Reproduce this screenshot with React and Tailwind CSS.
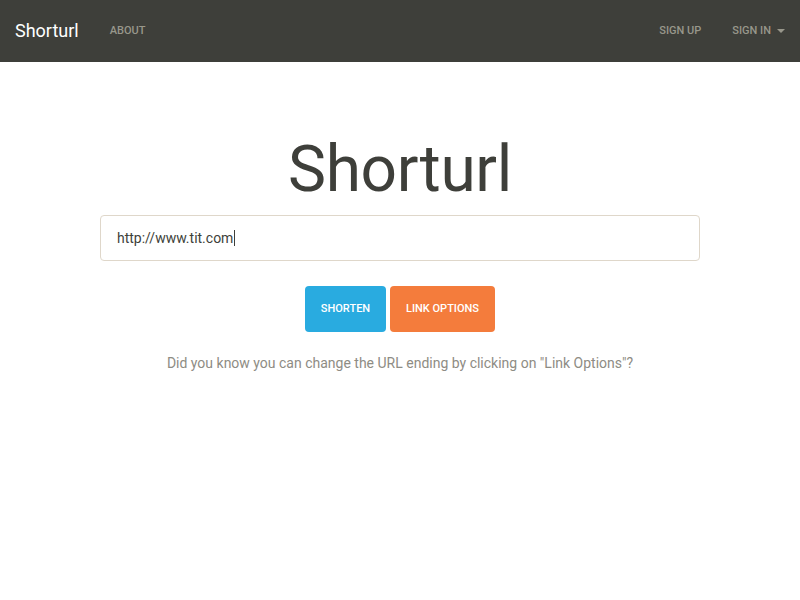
export default function App() {
  return (
    <div
      className="min-h-[600px] bg-white text-[#3e3f3a]"
      style={{ fontFamily: "Roboto, 'Liberation Sans', sans-serif" }}
    >
      <nav className="flex h-[62px] items-center justify-between bg-[#3e3f3a] px-[15px]">
        <div className="flex items-center">
          <span className="text-[18px] leading-none text-white">Shorturl</span>
          <a className="ml-[31px] text-[11px] font-medium uppercase text-[#98978b]">
            About
          </a>
        </div>
        <div className="flex items-center">
          <a className="text-[11px] font-medium uppercase text-[#98978b]">
            Sign up
          </a>
          <a className="ml-[31px] flex items-center text-[11px] font-medium uppercase text-[#98978b]">
            Sign in
            <svg className="ml-[6px] h-[4px] w-[8px]" viewBox="0 0 8 4" fill="#98978b">
              <path d="M0 0h8L4 4z" />
            </svg>
          </a>
        </div>
      </nav>

      <main className="flex flex-col items-center">
        <h1 className="mt-[76px] text-[64px] leading-none tracking-[-0.3px] text-[#3e3f3a]">
          Shorturl
        </h1>
        <div className="mt-[13px] flex h-[46px] w-[600px] items-center rounded-[4px] border border-[#dfd7ca] px-4">
          <span className="text-[14px] text-[#3e3f3a]">http://www.tit.com</span>
          <span className="ml-[1px] h-[16px] w-[1px] bg-[#3e3f3a]" />
        </div>
        <div className="mt-[25px] flex gap-1">
          <button className="h-[46px] w-[81px] rounded-[4px] bg-[#29abe0] text-[11px] font-medium uppercase text-white">
            Shorten
          </button>
          <button className="h-[46px] w-[105px] rounded-[4px] bg-[#f47c3c] text-[11px] font-medium uppercase text-white">
            Link Options
          </button>
        </div>
        <p className="mt-[21px] text-[14px] text-[#8e8c84]">
          Did you know you can change the URL ending by clicking on "Link Options"?
        </p>
      </main>
    </div>
  );
}
